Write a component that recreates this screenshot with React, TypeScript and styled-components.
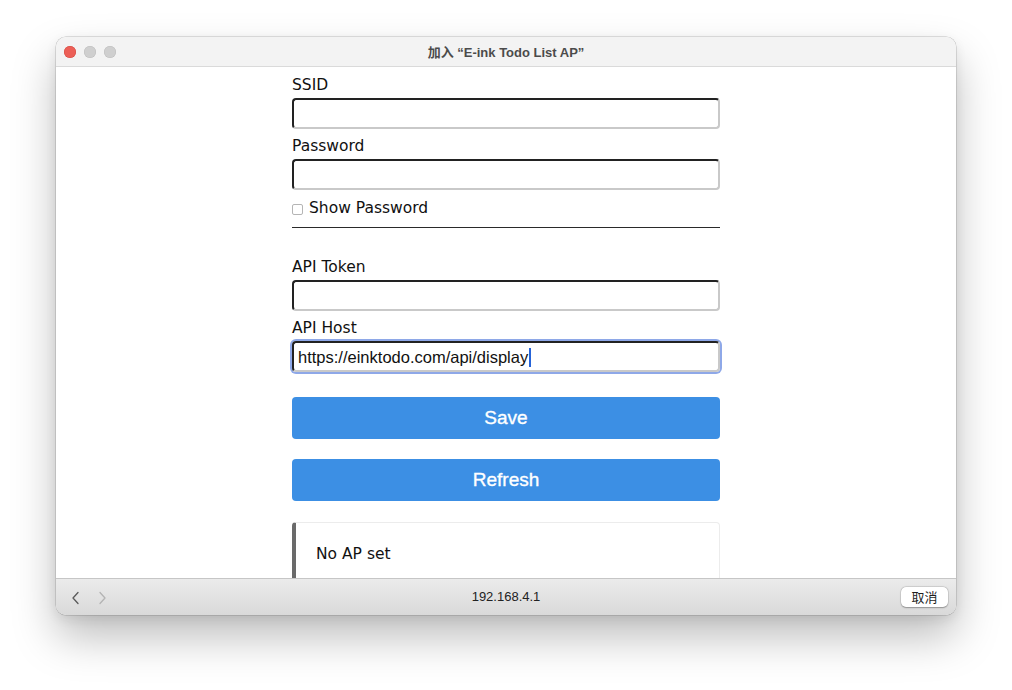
import styled, { createGlobalStyle } from 'styled-components';
import { FC } from 'react';

const GlobalStyle = createGlobalStyle`
	html, body {
		margin: 0;
		padding: 0;
		background: #ffffff;
	}
	body {
		width: 1012px;
		height: 690px;
		overflow: hidden;
	}
	* {
		box-sizing: border-box;
	}
`;

const LABEL_FONT = `'DejaVu Sans', Verdana, sans-serif`;
const UI_FONT = `'Liberation Sans', Arial, 'Noto Sans CJK SC', sans-serif`;

type FieldProps = {
	label: string;
};

const Field: FC<FieldProps> = ({ label }) => (
	<>
		<Label>{label}</Label>
		<TextInput type="text" />
	</>
);

const TrafficLights: FC = () => (
	<Lights>
		<Light $color="#ec5f57" $ring="#d4483f" />
		<Light $color="#cfcfcf" $ring="#bdbdbd" />
		<Light $color="#cfcfcf" $ring="#bdbdbd" />
	</Lights>
);

const Chevron: FC<{ dir: 'left' | 'right'; color: string }> = ({ dir, color }) => (
	<svg width="10" height="14" viewBox="0 0 10 14">
		<polyline
			points={dir === 'left' ? '7,1.5 2,7 7,12.5' : '3,1.5 8,7 3,12.5'}
			fill="none"
			stroke={color}
			strokeWidth="1.3"
			strokeLinecap="round"
			strokeLinejoin="round"
		/>
	</svg>
);

const App: FC = () => {
	return (
		<>
			<GlobalStyle />
			<Desktop>
				<Window>
					<TitleBar>
						<TrafficLights />
						<Title>加入 “E-ink Todo List AP”</Title>
					</TitleBar>
					<Content>
						<Form>
							<Field label="SSID" />
							<Field label="Password" />
							<CheckRow>
								<CheckBox type="checkbox" />
								<span>Show Password</span>
							</CheckRow>
							<Divider />
							<Field label="API Token" />
							<Label>API Host</Label>
							<FocusedInput>
								<span>https://einktodo.com/api/display</span>
								<Caret />
							</FocusedInput>
							<ActionButton>Save</ActionButton>
							<ActionButton>Refresh</ActionButton>
							<Notice>No AP set</Notice>
						</Form>
					</Content>
					<BottomBar>
						<NavGroup>
							<Chevron dir="left" color="#5a5a5a" />
							<Chevron dir="right" color="#b4b4b4" />
						</NavGroup>
						<Url>192.168.4.1</Url>
						<CancelWrap>
							<CancelButton>取消</CancelButton>
						</CancelWrap>
					</BottomBar>
				</Window>
			</Desktop>
		</>
	);
};

const Desktop = styled.div`
	width: 1012px;
	height: 690px;
	padding: 37px 0 0 56px;
`;

const Window = styled.div`
	width: 900px;
	height: 578px;
	display: flex;
	flex-direction: column;
	border-radius: 10px;
	overflow: hidden;
	background: #ffffff;
	box-shadow: 0 22px 44px rgba(0, 0, 0, 0.26), 0 4px 12px rgba(0, 0, 0, 0.08),
		0 0 0 0.5px rgba(0, 0, 0, 0.22);
`;

const TitleBar = styled.div`
	height: 30px;
	flex: none;
	display: grid;
	grid-template-columns: 1fr auto 1fr;
	align-items: center;
	background: #f3f3f3;
	border-bottom: 1px solid #dadada;
`;

const Lights = styled.div`
	display: flex;
	gap: 8px;
	padding-left: 8px;
`;

const Light = styled.span<{ $color: string; $ring: string }>`
	width: 12px;
	height: 12px;
	border-radius: 50%;
	background: ${(props) => props.$color};
	box-shadow: inset 0 0 0 0.5px ${(props) => props.$ring};
`;

const Title = styled.div`
	font-family: ${UI_FONT};
	font-weight: bold;
	font-size: 13px;
	color: #4b4b4b;
	white-space: nowrap;
`;

const Content = styled.div`
	flex: 1;
	overflow: hidden;
	background: #ffffff;
`;

const Form = styled.div`
	width: 428px;
	margin: 0 auto;
	padding-top: 8px;
	display: flex;
	flex-direction: column;
	font-family: ${LABEL_FONT};
	font-size: 15.5px;
	color: #111111;
`;

const Label = styled.label`
	display: block;
	line-height: 20px;
	margin-bottom: 3px;
`;

const TextInput = styled.input`
	width: 100%;
	height: 31px;
	margin: 0 0 7px;
	padding: 0 4px;
	border: 2px solid;
	border-color: #222222 #c9c9c9 #c9c9c9 #222222;
	border-radius: 4px;
	background: #ffffff;
	outline: none;
	font-family: ${UI_FONT};
	font-size: 16.5px;
`;

const FocusedInput = styled.div`
	width: 100%;
	height: 31px;
	margin-bottom: 7px;
	padding: 2px 4px 0;
	display: flex;
	align-items: center;
	border: 2px solid;
	border-color: #222222 #c9c9c9 #c9c9c9 #222222;
	border-radius: 4px;
	box-shadow: 0 0 0 2px #8ea8e8;
	font-family: ${UI_FONT};
	font-size: 16.5px;
	color: #111111;
	white-space: nowrap;
`;

const Caret = styled.span`
	width: 1.5px;
	height: 19px;
	margin-left: 1px;
	background: #2563d8;
`;

const CheckRow = styled.label`
	display: flex;
	align-items: center;
	gap: 6px;
	margin-top: 1px;
	line-height: 20px;
`;

const CheckBox = styled.input`
	appearance: none;
	width: 11px;
	height: 11px;
	margin: 2px 0 0;
	border: 1px solid #b5b5b5;
	border-radius: 2px;
	background: #ffffff;
`;

const Divider = styled.hr`
	width: 100%;
	margin: 9px 0 29px;
	border: 0;
	border-top: 1px solid #2a2a2a;
`;

const ActionButton = styled.button`
	height: 42px;
	margin-top: 18px;
	border: 0;
	border-radius: 4px;
	background: #3c8fe4;
	color: #ffffff;
	font-family: ${UI_FONT};
	font-size: 19px;
	-webkit-text-stroke: 0.35px #ffffff;
	& + & {
		margin-top: 20px;
	}
`;

const Notice = styled.div`
	margin-top: 21px;
	padding: 21px 20px 30px;
	border: 1px solid #ececec;
	border-left: 4px solid #6a6a6a;
	border-radius: 4px;
	line-height: 20px;
`;

const BottomBar = styled.div`
	height: 37px;
	flex: none;
	display: grid;
	grid-template-columns: 1fr auto 1fr;
	align-items: center;
	border-top: 1px solid #c6c6c6;
	background: linear-gradient(#ebebeb, #d9d9d9);
`;

const NavGroup = styled.div`
	display: flex;
	gap: 16px;
	padding-left: 15px;
	padding-top: 1px;
`;

const Url = styled.div`
	font-family: ${UI_FONT};
	font-size: 13px;
	color: #222222;
	padding-bottom: 1px;
`;

const CancelWrap = styled.div`
	display: flex;
	justify-content: flex-end;
	padding-right: 8px;
`;

const CancelButton = styled.button`
	width: 47px;
	height: 20px;
	padding: 0;
	border: 0;
	border-radius: 5px;
	background: #ffffff;
	box-shadow: 0 0.5px 1.5px rgba(0, 0, 0, 0.3), 0 0 0 0.5px rgba(0, 0, 0, 0.12);
	font-family: 'Noto Sans CJK SC', sans-serif;
	font-size: 13px;
	line-height: 20px;
	color: #1f1f1f;
`;

export default App;
